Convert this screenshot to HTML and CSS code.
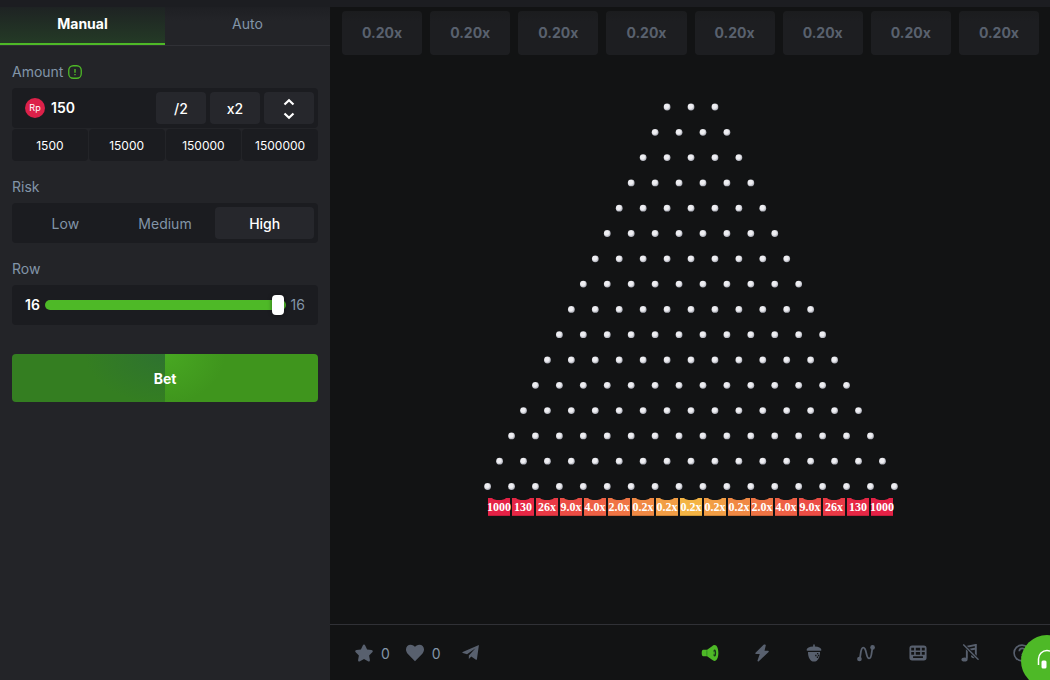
FILE: index.html
```html
<!DOCTYPE html>
<html lang="en">
<head>
<meta charset="utf-8">
<meta name="viewport" content="width=device-width, initial-scale=1">
<title>Plinko</title>
<link rel="stylesheet" href="styles.css">
</head>
<body>
<div class="topbar"></div>
<div class="game">
  <form class="sidebar">
    <div class="tabs">
      <button type="button" class="tab tab-active">Manual</button>
      <button type="button" class="tab">Auto</button>
    </div>
    <div class="controls">
      <div class="field">
        <div class="label-row">
          <label for="amount">Amount</label>
          <svg class="info" viewBox="0 0 14 14"><rect x=".75" y=".75" width="12.5" height="12.5" rx="4.5" fill="none" stroke="currentColor" stroke-width="1.3"/><path d="M7 4v3.8M7 9v1.3" stroke="currentColor" stroke-width="1.4"/></svg>
        </div>
        <div class="box amount">
          <span class="coin">Rp</span>
          <input id="amount" class="amount-input" type="text" value="150">
          <button type="button" class="step">/2</button>
          <button type="button" class="step">x2</button>
          <button type="button" class="step" aria-label="Adjust amount">
            <svg class="chevrons" viewBox="0 0 12 22"><path d="M1.500 6.500 6 2.300l4.500 4.200M1.500 15.500 6 19.700l4.500-4.200" fill="none" stroke="currentColor" stroke-width="2.200"/></svg>
          </button>
        </div>
        <div class="presets">
          <button type="button" class="preset">1500</button>
          <button type="button" class="preset">15000</button>
          <button type="button" class="preset">150000</button>
          <button type="button" class="preset">1500000</button>
        </div>
      </div>
      <div class="field">
        <div class="label-row" id="risk-label">Risk</div>
        <div class="box risks" role="group" aria-labelledby="risk-label">
          <button type="button" class="risk">Low</button>
          <button type="button" class="risk">Medium</button>
          <button type="button" class="risk risk-active">High</button>
        </div>
      </div>
      <div class="field">
        <div class="label-row"><label for="rows">Row</label></div>
        <div class="box rows">
          <span class="rows-value">16</span>
          <div class="track"><input id="rows" class="range" type="range" min="8" max="16" value="16"></div>
          <span class="rows-max">16</span>
        </div>
      </div>
      <button type="button" class="bet">Bet</button>
    </div>
  </form>
  <main class="stage">
    <div class="history">
      <div class="result">0.20x</div><div class="result">0.20x</div><div class="result">0.20x</div><div class="result">0.20x</div>
      <div class="result">0.20x</div><div class="result">0.20x</div><div class="result">0.20x</div><div class="result">0.20x</div>
    </div>
    <div class="board-area">
      <svg class="board" id="board" viewBox="0 0 420 424">
        <defs>
          <radialGradient id="peg" cx=".42" cy=".4" r=".6"><stop offset=".5" stop-color="#eeeef2"/><stop offset="1" stop-color="#a9abb5"/></radialGradient>
        </defs>
      </svg>
    </div>
    <footer class="toolbar">
      <div class="social">
        <button type="button" class="tool counted"><svg class="icon" viewBox="1 1 18 18"><path d="M10 1.500c.6 0 .9.4 1.200 1l1.900 4 4.400.6c1.300.2 1.700 1.300.8 2.200l-3.200 3.100.8 4.500c.2 1.300-.8 1.900-1.900 1.300L10 16.100l-4 2.100c-1.100.6-2.100 0-1.900-1.300l.8-4.500-3.200-3.100c-.9-.9-.5-2 .8-2.200l4.400-.6 1.900-4c.3-.6.6-1 1.200-1Z"/></svg><span>0</span></button>
        <button type="button" class="tool counted"><svg class="icon" viewBox="1 1 18 18"><path d="M10 18.200 2.900 11C-.8 7 1.300 1.800 5.600 1.800c2 0 3.500.9 4.400 2.300.9-1.400 2.400-2.300 4.400-2.300 4.300 0 6.400 5.200 2.700 9.200Z"/></svg><span>0</span></button>
        <button type="button" class="tool share" aria-label="Share"><svg class="icon" viewBox="0 1 20 20"><path d="M18.800 2.200.8 9.900c-.6.3-.5.9.1 1.100l4.700 1.500L15 5.700l-7.400 8v4l2.700-2.900 5.200 3.700c.5.300 1 .1 1.100-.5Z"/></svg></button>
      </div>
      <div class="tools">
        <button type="button" class="tool tool-on" aria-label="Sound"><svg class="icon" viewBox="0 0 20 20"><path d="M2.500 6.500h4.300l5.500-4C13.200 1.700 14 1.200 15 1.200c2.700 0 4.300 3.900 4.300 8.800s-1.600 8.800-4.300 8.800c-1 0-1.800-.5-2.700-1.200l-5.500-4.100H2.500C1.200 13.500.8 12 .8 10s.4-3.500 1.700-3.500Z"/><path d="M6.500 7v6" stroke="#2d8a20"/><ellipse cx="15.200" cy="10" rx="1.600" ry="3.900" fill="#17331a"/><path d="M13.500 8.200h1.700v3.600h-1.700z"/></svg></button>
        <button type="button" class="tool" aria-label="Turbo"><svg class="icon" viewBox="0 0 20 20"><path d="M11.500 1 2.800 9.700c-.5.600-.3 1.400.5 1.400h4.200L5 18.300c-.3 1 .9 1.400 1.500.8L17.300 9c.5-.500.2-1.500-.5-1.500h-4l1.400-5.800c.3-1.200-1.600-1.700-2.700-.7Z"/></svg></button>
        <button type="button" class="tool" aria-label="Acorn"><svg class="icon" viewBox="0 0 20 20"><path d="M9.100.5h1.800v2.300c4.200.2 7 1.600 7.300 3.600.1.700-.2 1.100-.8 1.100H2.600c-.6 0-.9-.4-.8-1.100.3-2 3.100-3.400 7.300-3.600ZM3.300 8.800h13.400c0 6-2.500 10.700-6.700 10.700S3.300 14.800 3.300 8.800Z"/><path d="M13.300 10h1.500v1.500h-1.500zM11.300 12h1.500v1.500h-1.500zm3 0h1.500v1.500h-1.500zm-1.200 2h1.500v1.500h-1.500z" fill="#121314"/></svg></button>
        <button type="button" class="tool" aria-label="Trends"><svg class="icon" viewBox="0 0 20 20"><path d="M2.800 17C4.500 13 3.500 4 7 4c4.200 0 2.500 12 6.500 12 3.500 0 2.200-9 4-12" fill="none" stroke="currentColor" stroke-width="2"/><circle cx="2.700" cy="16.700" r="2.600"/><circle cx="17.300" cy="3.800" r="2.600"/></svg></button>
        <button type="button" class="tool" aria-label="Hotkeys"><svg class="icon" viewBox="0 0 20 20"><path fill-rule="evenodd" d="M3.500 1.800h13c1.900 0 3 1.100 3 3v10.400c0 1.900-1.100 3-3 3h-13c-1.900 0-3-1.100-3-3V4.800c0-1.900 1.100-3 3-3ZM2.500 4.200v3.100h3.200V4.200Zm5 0v3.100h4.900V4.200Zm6.700 0v3.100h3.300V4.200ZM2.500 8.900v3h3.200v-3Zm5 0v3h4.900v-3Zm6.700 0v3h3.300v-3ZM4.500 13.700v1.800h11v-1.800Z"/></svg></button>
        <button type="button" class="tool" aria-label="Music off"><svg class="icon" viewBox="0 0 20 20"><path d="M6.500 16.500V3l10-2v12M6.500 7l10-2" fill="none" stroke="currentColor" stroke-width="2.100"/><ellipse cx="3.900" cy="17.200" rx="3.400" ry="2.300"/><ellipse cx="14.300" cy="13.500" rx="3" ry="2.300"/><path d="m2.500.5 17 17" stroke="#121314" stroke-width="3.500"/><path d="m2.500.5 17 17" stroke="currentColor" stroke-width="1.600"/></svg></button>
        <button type="button" class="tool" aria-label="Help"><svg class="icon" viewBox="0 0 20 20"><circle cx="10" cy="10" r="8.800" fill="none" stroke="currentColor" stroke-width="1.800"/><path d="M7 8c0-4.300 6.300-4.200 6.300-.5 0 2.300-3.100 2.400-3.100 4.800M10.200 13.700v2" fill="none" stroke="currentColor" stroke-width="1.900"/></svg></button>
      </div>
    </footer>
  </main>
</div>
<button type="button" class="support" aria-label="Live support"><svg class="headset" viewBox="0 0 20 20"><path d="M1.500 16v-6a8.500 8.500 0 0 1 17 0v6" fill="none" stroke="currentColor" stroke-width="1.500"/><rect x="4.500" y="11.500" width="5" height="8" rx="1.500"/><rect x="13" y="11.500" width="4" height="8" rx="1.500"/></svg></button>
<script src="board.js"></script>
</body>
</html>
```

FILE: styles.css
```css
* { box-sizing: border-box; }

body {
  margin: 0;
  min-height: 100vh;
  display: flex;
  flex-direction: column;
  overflow: hidden;
  background: #121314;
  color: #fff;
  font: 14px/20px Inter, "Liberation Sans", sans-serif;
}

button, input { font: inherit; color: inherit; }
button { border: 0; padding: 0; background: none; cursor: pointer; }

.topbar { height: 7px; background: #1c1d21; }
.game { flex: 1; display: flex; }

.sidebar {
  width: 330px;
  flex: none;
  background: #232428;
}

.tabs {
  display: flex;
  height: 39px;
  border-bottom: 1px solid #303136;
  background: linear-gradient(#1e1f23, #232428 14px);
}
.tab { flex: 1; color: #8295a8; padding-bottom: 4px; }
.tab-active {
  color: #fff;
  font-weight: 700;
  border-bottom: 2px solid #4eb927;
  padding-bottom: 2px;
  background: linear-gradient(#1e2323, #243a26);
}

.controls { display: flex; flex-direction: column; padding: 16px 12px; }
.field { margin-bottom: 16px; }
.label-row {
  display: flex;
  align-items: center;
  gap: 5px;
  height: 20px;
  margin-bottom: 6px;
  color: #8295a8;
}
.info { width: 14px; height: 14px; color: #4eb927; }

.box {
  display: flex;
  align-items: center;
  height: 40px;
  padding: 4px;
  border-radius: 4px;
  background: #1b1c20;
}
.amount { gap: 4px; }
.coin {
  width: 20px;
  height: 20px;
  margin-left: 9px;
  flex: none;
  border-radius: 50%;
  background: #dc2149;
  font-size: 9px;
  line-height: 19px;
  text-align: center;
}
.amount-input {
  flex: 1;
  min-width: 0;
  padding: 0 2px;
  border: 0;
  outline: 0;
  background: none;
  font-weight: 600;
}
.step {
  display: flex;
  align-items: center;
  justify-content: center;
  width: 50px;
  height: 32px;
  padding-top: 1px;
  border-radius: 4px;
  background: #26272c;
  font-weight: 500;
}
.chevrons { width: 12px; height: 22px; }

.presets { display: flex; gap: 1px; margin-top: 1px; }
.preset {
  flex: 1;
  height: 32px;
  padding-top: 2px;
  border-radius: 4px;
  background: #1b1c20;
  font-size: 12px;
}

.risks { gap: 1px; }
.risk { flex: 1; height: 32px; padding-top: 2px; border-radius: 4px; color: #8295a8; }
.risk-active { background: #26272c; color: #fff; font-weight: 500; }

.rows { padding: 0 13px; gap: 5px; }
.rows-value { font-weight: 600; }
.rows-max { color: #8295a8; }
.track {
  flex: 1;
  display: flex;
  align-items: center;
  height: 10px;
  padding-right: 2px;
  border-radius: 5px;
  background: #4eb927;
}
.range { appearance: none; width: 100%; height: 20px; margin: 0; background: none; }
.range::-webkit-slider-thumb {
  appearance: none;
  width: 12px;
  height: 20px;
  border-radius: 4px;
  background: #fff;
  box-shadow: 0 0 4px rgba(0, 0, 0, .4);
}

.bet {
  height: 48px;
  margin-top: 13px;
  padding-top: 2px;
  border-radius: 4px;
  font-weight: 700;
  background:
    radial-gradient(ellipse 80px 50px at 100% 0, #2e7230, #347e21) left / 50% 100% no-repeat,
    radial-gradient(ellipse 60px 50px at 0 0, #48a822, #3f951d) right / 50% 100% no-repeat;
}

.stage { flex: 1; min-width: 0; display: flex; flex-direction: column; }
.history { display: flex; gap: 8px; padding: 4px 11px 0 12px; }
.result {
  flex: 1;
  height: 44px;
  border-radius: 4px;
  background: linear-gradient(#1b1c1e, #1d1e21 10px);
  color: #59616e;
  font-weight: 700;
  line-height: 44px;
  text-align: center;
}
.board-area { flex: 1; display: flex; justify-content: center; align-items: flex-start; padding-top: 41px; }
.board { width: 420px; }
.peg { fill: url(#peg); }
.bin-label {
  fill: #fff;
  font: 700 12px "Liberation Serif", serif;
  text-anchor: middle;
}

.toolbar {
  display: flex;
  justify-content: space-between;
  height: 56px;
  padding: 0 19px 0 25px;
  border-top: 1px solid #303136;
}
.social, .tools { display: flex; align-items: center; }
.social { gap: 16px; }
.share { margin-left: 5px; }
.tools { gap: 34px; }
.tool { display: flex; align-items: center; gap: 8px; color: #58606e; }
.counted span { color: #8295a8; padding-top: 3px; }
.tool-on { color: #4eb927; }
.icon { width: 18px; height: 18px; fill: currentColor; }
.headset { width: 20px; height: 20px; fill: currentColor; }

.support {
  position: fixed;
  right: -23px;
  bottom: -7px;
  width: 52px;
  height: 52px;
  border-radius: 50%;
  background: #4eb927;
}
```

FILE: board.js
```js
const NS = "http://www.w3.org/2000/svg";
const board = document.getElementById("board");
const PITCH = 23.93;
const CENTER = 211;

function add(name, attrs, text) {
  const node = document.createElementNS(NS, name);
  for (const key in attrs) node.setAttribute(key, attrs[key]);
  if (text) node.textContent = text;
  board.appendChild(node);
}

for (let row = 0; row < 16; row++) {
  const count = row + 3;
  for (let i = 0; i < count; i++) {
    add("circle", {
      class: "peg",
      cx: CENTER + (i - (count - 1) / 2) * PITCH,
      cy: 11 + row * 25.3,
      r: 3.4
    });
  }
}

const labels = ["1000", "130", "26x", "9.0x", "4.0x", "2.0x", "0.2x", "0.2x", "0.2x"];
const colors = ["#e52146", "#e62745", "#e93945", "#ec4d45", "#ee6045", "#ef7444", "#f08944", "#f29e45", "#f4b444"];

for (let i = 0; i < 17; i++) {
  const kind = Math.min(i, 16 - i);
  const left = Math.round(CENTER + (i - 8) * PITCH - 11.3);
  add("path", {
    d: `M${left} 402h4q2 2 7 2t7-2h4v18h-22z`,
    fill: colors[kind]
  });
  add("rect", { x: left, y: 419, width: 22, height: 1, fill: "#000", "fill-opacity": 0.15 });
  add("text", { class: "bin-label", x: left + 11, y: 415 }, labels[kind]);
}
```
